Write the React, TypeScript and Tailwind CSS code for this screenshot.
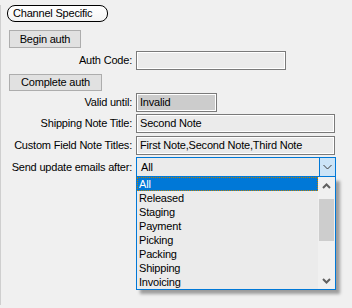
import React from "react";

const items = ["All", "Released", "Staging", "Payment", "Picking", "Packing", "Shipping", "Invoicing"];

function Field({ label, children, className }: { label: string; children: React.ReactNode; className?: string }) {
  return (
    <div className={"flex items-center " + (className ?? "")}>
      <div className="w-[132px] text-right pr-[1px] leading-none whitespace-nowrap">{label}</div>
      <div className="ml-[3px]">{children}</div>
    </div>
  );
}

function TextBox({ w, value, bg }: { w: string; value?: string; bg: string }) {
  return (
    <div
      className={`${w} ${bg} h-[19px] border border-[#7a7a7a] shadow-[inset_0_0_0_1px_#ffffff] flex items-center pl-[3px] leading-none whitespace-nowrap`}
    >
      {value}
    </div>
  );
}

export default function App() {
  return (
    <div className="w-[352px] h-[308px] bg-[#f0f0f0] pt-[8px] overflow-hidden font-['Liberation_Sans',Arial,sans-serif] text-[11px] tracking-[-0.2px] text-black">
      <div className="h-full border-l border-[#cfcfcf]">
        <div className="-mt-[3px] ml-[6px] w-[101px] h-[17px] rounded-[8px] border border-black bg-gradient-to-b from-white to-[#f4f4f4] flex items-center pl-[5px] leading-none">
          Channel Specific
        </div>

        <div className="mt-[8px] ml-[8px] w-[72px] h-[18px] bg-[#e1e1e1] border border-[#adadad] flex items-center justify-center leading-none">
          Begin auth
        </div>

        <Field label="Auth Code:" className="mt-[3px]">
          <TextBox w="w-[150px]" bg="bg-[#ebebeb]" />
        </Field>

        <div className="mt-[4px] ml-[8px] w-[93px] h-[17px] bg-[#e1e1e1] border border-[#adadad] flex items-center justify-center leading-none">
          Complete auth
        </div>

        <Field label="Valid until:" className="mt-[2px]">
          <TextBox w="w-[81px]" bg="bg-[#cccccc]" value="Invalid" />
        </Field>

        <Field label="Shipping Note Title:" className="mt-[2px]">
          <TextBox w="w-[199px]" bg="bg-[#ebebeb]" value="Second Note" />
        </Field>

        <Field label="Custom Field Note Titles:" className="mt-[3px]">
          <TextBox w="w-[199px]" bg="bg-[#ebebeb]" value="First Note,Second Note,Third Note" />
        </Field>

        <Field label="Send update emails after:" className="mt-[2px]">
          <div className="relative">
            <div className="w-[200px] h-[20px] border border-[#0078d7] bg-[#ebebeb] flex">
              <div className="flex-1 flex items-center pl-[4px] leading-none">All</div>
              <div className="w-[16px] h-full bg-[#cce4f7] border-l border-[#0078d7] flex items-center justify-center">
                <svg width="9" height="6" viewBox="0 0 9 6">
                  <polyline points="0.5,1 4.5,5 8.5,1" fill="none" stroke="#3c3c3c" strokeWidth="1" />
                </svg>
              </div>
            </div>
            <div className="absolute left-0 top-full w-[200px] h-[113px] border-x border-b border-[#0078d7] bg-[#ebebeb] flex shadow-[4px_4px_3px_rgba(0,0,0,0.35)]">
              <div className="flex-1 flex flex-col">
                {items.map((it, i) => (
                  <div
                    key={it}
                    className={
                      "h-[14px] flex items-center pl-[2px] leading-none whitespace-nowrap " +
                      (i === 0 ? "bg-[#0078d7] text-white outline outline-1 outline-dotted outline-[#c08000] -outline-offset-1" : "")
                    }
                  >
                    {it}
                  </div>
                ))}
              </div>
              <div className="w-[17px] bg-[#f0f0f0] flex flex-col">
                <div className="h-[17px] flex items-center justify-center">
                  <svg width="9" height="6" viewBox="0 0 9 6">
                    <polyline points="1,5 4.5,1.5 8,5" fill="none" stroke="#606060" strokeWidth="2" />
                  </svg>
                </div>
                <div className="flex-1 relative">
                  <div className="mt-[5px] mx-[1px] h-[42px] bg-[#cdcdcd]" />
                </div>
                <div className="h-[17px] flex items-center justify-center">
                  <svg width="9" height="6" viewBox="0 0 9 6">
                    <polyline points="1,1 4.5,4.5 8,1" fill="none" stroke="#606060" strokeWidth="2" />
                  </svg>
                </div>
              </div>
            </div>
          </div>
        </Field>
      </div>
    </div>
  );
}
